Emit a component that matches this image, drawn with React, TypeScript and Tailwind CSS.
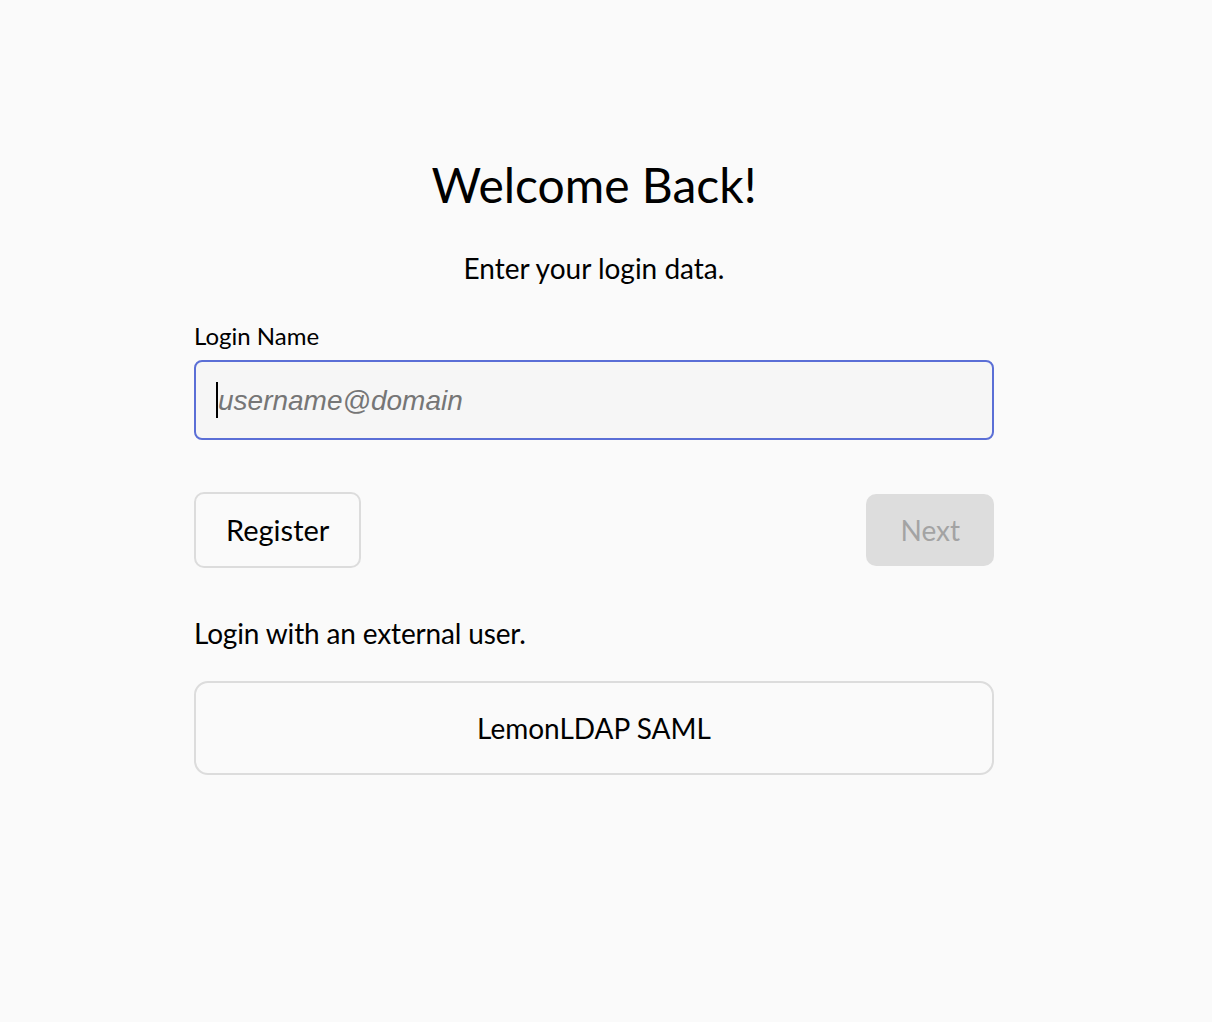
export default function App() {
  return (
    <div className="min-h-[1022px] bg-[#fafafa] flex justify-center pr-6 font-['Lato',sans-serif] text-black">
      <div className="w-[800px] flex flex-col pt-[150px]">
        <h1 className="text-center text-[48px] leading-[70px]">Welcome Back!</h1>
        <p className="text-center text-[28px] leading-[36px] mt-[30px]">Enter your login data.</p>

        <label className="text-[24px] leading-[30px] mt-[35px]">Login Name</label>
        <div className="mt-[9px] h-[80px] rounded-[8px] border-2 border-[#5b6fd6] bg-[#f6f6f6] flex items-center pl-[20px]">
          <span className="w-[2px] h-[36px] bg-black" />
          <input
            className="flex-1 bg-transparent outline-none text-[28px] italic font-['Liberation_Sans',Arial,sans-serif] placeholder:text-[#767676] mt-[2px]"
            placeholder="username@domain"
          />
        </div>

        <div className="flex justify-between items-center mt-[52px]">
          <button className="h-[76px] px-[30px] rounded-[10px] border-2 border-[#dcdcdc] text-[29px]">Register</button>
          <button className="h-[72px] px-[34px] rounded-[10px] bg-[#dddddd] text-[#a3a3a3] text-[28px]">Next</button>
        </div>

        <p className="text-[28px] leading-[36px] mt-[47px] tracking-[-0.15px]">Login with an external user.</p>
        <button className="mt-[30px] h-[94px] rounded-[14px] border-2 border-[#dcdcdc] text-[28px]">LemonLDAP SAML</button>
      </div>
    </div>
  )
}
